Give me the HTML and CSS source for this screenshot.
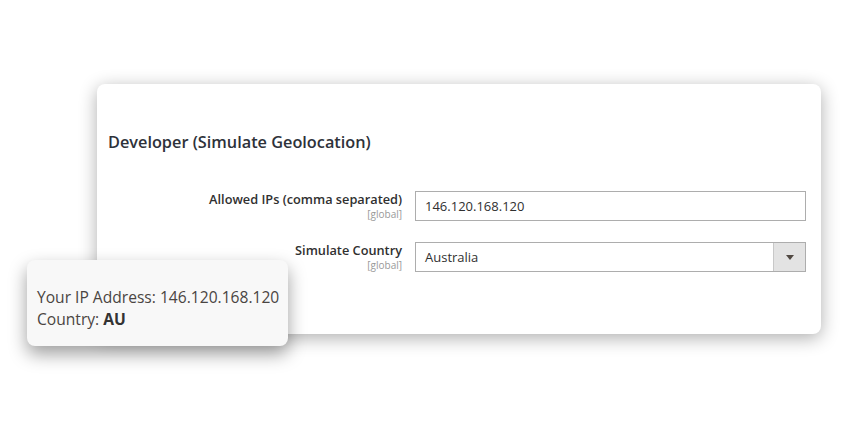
FILE: index.html
```html
<!DOCTYPE html>
<html>
<head>
<meta charset="utf-8">
<link rel="stylesheet" href="styles.css">
</head>
<body>
<div class="stage">
  <div class="card">
    <h2 class="title">Developer (Simulate Geolocation)</h2>
    <div class="row">
      <div class="label">
        <span class="name">Allowed IPs (comma separated)</span>
        <span class="scope">[global]</span>
      </div>
      <div class="control">
        <div class="input">146.120.168.120</div>
      </div>
    </div>
    <div class="row">
      <div class="label">
        <span class="name">Simulate Country</span>
        <span class="scope">[global]</span>
      </div>
      <div class="control">
        <div class="select">
          <span class="value">Australia</span>
          <span class="btn"><svg width="8" height="5" viewBox="0 0 8 5"><path d="M0 0 L8 0 L4 5 Z" fill="#514943"/></svg></span>
        </div>
      </div>
    </div>
  </div>
  <div class="tip">
    <div>Your IP Address: 146.120.168.120</div>
    <div>Country: <b>AU</b></div>
  </div>
</div>
</body>
</html>
```

FILE: styles.css
```css
html, body {
  margin: 0;
  padding: 0;
  background: #fff;
}
body {
  font-family: "Open Sans", "Liberation Sans", sans-serif;
  color: #303030;
  width: 853px;
  height: 425px;
  overflow: hidden;
}
.stage {
  position: relative;
  padding: 84px 0 0 97px;
}
.card {
  width: 724px;
  height: 250px;
  box-sizing: border-box;
  background: #fff;
  border-radius: 8px;
  box-shadow: 0 4px 18px rgba(0,0,0,0.32);
  padding: 48px 15px 0 11px;
}
.title {
  margin: 0 0 38px 0;
  font-size: 16.3px;
  line-height: 21px;
  font-weight: 600;
  color: #2e323a;
}
.row {
  display: flex;
  gap: 13px;
  margin-bottom: 21px;
}
.label {
  width: 294px;
  display: flex;
  flex-direction: column;
  align-items: flex-end;
  text-align: right;
}
.name {
  font-size: 12.75px;
  font-weight: 600;
  line-height: 17px;
  color: #303030;
}
.scope {
  font-size: 10px;
  line-height: 12px;
  color: #999;
}
.control {
  flex: 1;
}
.input, .select {
  height: 30px;
  box-sizing: border-box;
  border: 1px solid #adadad;
  font-size: 13px;
  line-height: 28px;
  color: #303030;
  background: #fff;
}
.input {
  padding-left: 9px;
}
.select {
  display: flex;
}
.select .value {
  flex: 1;
  padding-left: 9px;
}
.select .btn {
  width: 31px;
  background: #e3e3e3;
  border-left: 1px solid #c8c8c8;
  display: flex;
  align-items: center;
  justify-content: center;
}
.tip {
  position: absolute;
  left: 27px;
  top: 260px;
  width: 261px;
  height: 86px;
  box-sizing: border-box;
  padding: 26px 0 0 10px;
  background: #f8f8f8;
  border-radius: 8px;
  box-shadow: 0 8px 18px rgba(0,0,0,0.38);
  font-size: 15.6px;
  line-height: 22px;
  color: #4a4542;
}
.tip b {
  font-weight: 700;
  color: #333;
}
```
